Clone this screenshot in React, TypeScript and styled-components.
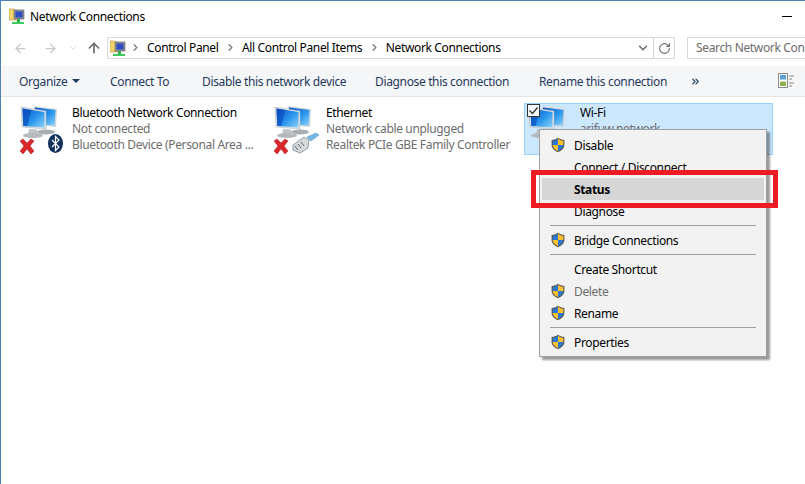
import React from "react";
import styled, { createGlobalStyle } from "styled-components";
import { ArrowLeft, ArrowRight, ArrowUp, ChevronDown, ChevronRight, RotateCw, ChevronsRight } from "lucide-react";

const GlobalStyle = createGlobalStyle`
  html, body { margin: 0; padding: 0; background: #fff; }
  body { font-family: "Noto Sans", "Open Sans", sans-serif; font-size: 12px; letter-spacing: -0.35px; color: #000; }
`;

const Win = styled.div`
  position: relative;
  box-sizing: border-box;
  width: 805px;
  height: 484px;
  overflow: hidden;
  background: #fff;
  border-top: 1px solid #4f81bd;
  border-left: 1px solid #4f81bd;
`;

const TitleBar = styled.div`
  height: 31px;
  display: flex;
  align-items: center;
  padding: 0 13px 0 8px;
  gap: 5px;
`;

const TitleText = styled.span`
  flex: 1;
  line-height: 16px;
`;

const MinimizeGlyph = styled.div`
  width: 10px;
  height: 1px;
  background: #000;
`;

const NavBar = styled.div`
  height: 34px;
  display: flex;
  align-items: center;
  padding: 0 0 2px 11px;
  box-sizing: border-box;
`;

const NavButton = styled.div<{ $w?: number; $gap: number; $color: string }>`
  width: ${(p) => p.$w ?? 16}px;
  margin-left: ${(p) => p.$gap}px;
  display: flex;
  justify-content: center;
  color: ${(p) => p.$color};
`;

const AddressBox = styled.div`
  margin-left: 5px;
  box-sizing: border-box;
  width: 568px;
  height: 22px;
  border: 1px solid #d9d9d9;
  display: flex;
  align-items: center;
  padding-left: 2px;
`;

const Crumbs = styled.div`
  flex: 1;
  display: flex;
  align-items: center;
  padding: 0 0 2px 2px;
`;

const Crumb = styled.span`
  margin: 0 4.5px 0 6px;
  white-space: nowrap;
`;

const CrumbArrow = styled(ChevronRight)`
  color: #808080;
  margin-left: 2px;
`;

const AddressAction = styled.div<{ $divider?: boolean }>`
  width: 20px;
  height: 20px;
  display: flex;
  align-items: center;
  justify-content: center;
  color: #6d6d6d;
  border-left: ${(p) => (p.$divider ? "1px solid #d9d9d9" : "none")};
`;

const SearchBox = styled.div`
  margin-left: 12px;
  box-sizing: border-box;
  flex: 1;
  height: 22px;
  border: 1px solid #d9d9d9;
  border-right: none;
  padding-left: 8px;
  line-height: 20px;
  color: #6d6d6d;
  white-space: nowrap;
  overflow: hidden;
`;

const Toolbar = styled.div`
  height: 31px;
  box-sizing: border-box;
  display: flex;
  align-items: center;
  background: #f5f6f7;
  border-bottom: 1px solid #e5e5e5;
  padding-left: 18px;
  color: #1e395b;
`;

const ToolItem = styled.div<{ $w: number }>`
  width: ${(p) => p.$w}px;
  flex: none;
  display: flex;
  align-items: center;
  gap: 5px;
  white-space: nowrap;
`;

const Caret = styled.span`
  width: 0;
  height: 0;
  border-left: 4px solid transparent;
  border-right: 4px solid transparent;
  border-top: 4px solid #1e395b;
`;

const ConnectionList = styled.div`
  display: flex;
  padding: 6px 0 0 15px;
  gap: 4px;
`;

const Connection = styled.div<{ $selected?: boolean }>`
  position: relative;
  box-sizing: border-box;
  width: ${(p) => (p.$selected ? 249 : 250)}px;
  height: 52px;
  display: flex;
  padding-left: 1px;
  background: ${(p) => (p.$selected ? "#cce8ff" : "transparent")};
  border: 1px solid ${(p) => (p.$selected ? "#99d1ff" : "transparent")};
`;

const ConnectionText = styled.div`
  margin-left: 6px;
  padding-top: 1px;
  line-height: 16px;
  white-space: nowrap;
`;

const Sub = styled.div`
  color: #6d6d6d;
`;

const Check = styled.div`
  position: absolute;
  left: 2px;
  top: 0;
  width: 13px;
  height: 13px;
  box-sizing: border-box;
  border: 1px solid #333;
  background: #f4f9fd;
  display: flex;
  align-items: center;
  justify-content: center;
`;

const Menu = styled.div`
  position: absolute;
  left: 538px;
  top: 128px;
  box-sizing: border-box;
  width: 228px;
  height: 228px;
  padding: 4px 2px 0;
  background: #f2f2f2;
  border: 1px solid #a0a0a0;
  box-shadow: 3px 3px 2px rgba(0, 0, 0, 0.4);
`;

const MenuRow = styled.div<{ $active?: boolean; $disabled?: boolean }>`
  height: 22px;
  display: flex;
  align-items: center;
  padding-left: 8px;
  gap: 8px;
  background: ${(p) => (p.$active ? "#d6d6d6" : "transparent")};
  font-weight: ${(p) => (p.$active ? 700 : 400)};
  color: ${(p) => (p.$disabled ? "#6d6d6d" : "#000")};
`;

const IconSlot = styled.span`
  width: 16px;
  height: 16px;
  flex: none;
`;

const Separator = styled.div`
  height: 1px;
  margin: 3px 8px;
  background: #a0a0a0;
`;

const Callout = styled.div`
  position: absolute;
  left: 530px;
  top: 169px;
  width: 247px;
  height: 38px;
  box-sizing: border-box;
  border: 5px solid #ed1c24;
`;

const Shield = () => (
  <svg width="16" height="16" viewBox="0 0 16 16">
    <path d="M8 .8C6 2.2 4 2.8 1.6 3v5c0 3.4 2.6 5.6 6.4 7.2 3.8-1.6 6.4-3.800 6.4-7.200V3C12 2.800 10 2.200 8 .8z" fill="#5f5a4e" />
    <path d="M8 2C6.400 3 4.600 3.600 2.700 3.900V8H8z" fill="#2a78d2" />
    <path d="M8 2c1.600 1 3.400 1.600 5.300 1.900V8H8z" fill="#fbc02d" />
    <path d="M2.700 8c.1 2.800 2.300 4.700 5.300 6V8z" fill="#fbc02d" />
    <path d="M13.300 8c-.1 2.800-2.300 4.700-5.300 6V8z" fill="#2a78d2" />
  </svg>
);

const FolderIcon = () => (
  <svg width="16" height="17" viewBox="0 0 16 17" style={{ flex: "none" }}>
    <path d="M0 1h5l1 1h3v10H0z" fill="#f3d36b" stroke="#b59a3e" strokeWidth=".6" />
    <rect x="5" y="2" width="10" height="9" fill="#8e8e99" stroke="#666" strokeWidth=".6" />
    <rect x="6.500" y="3.500" width="7" height="6" fill="#2f4fc4" />
    <rect x="8" y="11" width="3" height="3" fill="#25b04a" />
    <rect x="3" y="14" width="12" height="2" fill="#3ccb5e" />
  </svg>
);

const Monitors = ({ id }: { id: string }) => (
  <>
    <defs>
      <linearGradient id={id} x1="0" y1="0" x2="1" y2="1">
        <stop offset="0" stopColor="#0752c8" />
        <stop offset=".55" stopColor="#2a96ec" />
        <stop offset="1" stopColor="#8fd3fa" />
      </linearGradient>
    </defs>
    <ellipse cx="28" cy="28" rx="9" ry="2.500" fill="#a9aeb3" />
    <path d="M15 2l24 3-1 18-11-1z" fill="#cfd5da" />
    <path d="M17 3.500l20.500 2.500-.8 15.500-19.700-1.500z" fill={`url(#${id})`} />
    <path d="M3 3l25 4v18L4 23z" fill="#dfe3e6" stroke="#aab0b5" strokeWidth=".5" />
    <path d="M4.500 4.500l22 3.500v15.500L5.200 22z" fill={`url(#${id})`} />
    <path d="M4.500 4.500l9 1.400-4 16.400-4.300-.3z" fill="#0645b8" opacity=".55" />
    <path d="M11 25l8 .5.500 5H10z" fill="#bfc4c8" />
    <ellipse cx="15" cy="31.500" rx="10" ry="2.600" fill="#b4b9bd" />
  </>
);

const RedX = () => (
  <path d="M2 37l3-2 4 4 4-4 3 2-4 5 4 5-3 3-4-5-4 5-3-3 4-5z" fill="#d9272a" stroke="#a51a1c" strokeWidth=".5" />
);

const NetIcon = ({ id, badge }: { id: string; badge?: "bluetooth" | "plug" }) => (
  <svg width="48" height="50" viewBox="0 0 48 50" style={{ flex: "none" }}>
    <Monitors id={id} />
    {badge && <RedX />}
    {badge === "bluetooth" && (
      <>
        <ellipse cx="37.500" cy="39.500" rx="7.500" ry="9.500" fill="#10305e" />
        <path d="M34 36l7 7-3.500 3.500v-14L41 36l-7 7" fill="none" stroke="#fff" strokeWidth="1.200" />
      </>
    )}
    {badge === "plug" && (
      <>
        <path d="M21 41l11-8 5 3-1 8-8 5-7-3z" fill="#d6dadd" stroke="#6f7a84" strokeWidth=".7" />
        <path d="M23 42l3 4M26 40l3 4M29 38l3 4" stroke="#5d6872" strokeWidth="1" />
        <path d="M35 33l9-4 3 2-8 6z" fill="#6fb7e6" stroke="#5a8fb5" strokeWidth=".5" />
      </>
    )}
  </svg>
);

const menu = [
  { label: "Disable", shield: true },
  { label: "Connect / Disconnect" },
  { label: "Status", active: true },
  { label: "Diagnose", sep: true },
  { label: "Bridge Connections", shield: true, sep: true },
  { label: "Create Shortcut" },
  { label: "Delete", shield: true, disabled: true },
  { label: "Rename", shield: true, sep: true },
  { label: "Properties", shield: true },
];

const toolItems = [
  { label: "Connect To", w: 92 },
  { label: "Disable this network device", w: 173 },
  { label: "Diagnose this connection", w: 164 },
  { label: "Rename this connection", w: 151 },
];

export default function App() {
  return (
    <>
      <GlobalStyle />
      <Win>
        <TitleBar>
          <FolderIcon />
          <TitleText>Network Connections</TitleText>
          <MinimizeGlyph />
        </TitleBar>
        <NavBar>
          <NavButton $gap={0} $color="#c8c8c8"><ArrowLeft size={15} /></NavButton>
          <NavButton $gap={14} $color="#c8c8c8"><ArrowRight size={15} /></NavButton>
          <NavButton $gap={8} $w={14} $color="#d0d0d0"><ChevronDown size={10} /></NavButton>
          <NavButton $gap={6} $color="#6d6d6d"><ArrowUp size={16} strokeWidth={2.500} /></NavButton>
          <AddressBox>
            <FolderIcon />
            <Crumbs>
              <CrumbArrow size={11} strokeWidth={3} />
              <Crumb>Control Panel</Crumb>
              <CrumbArrow size={11} strokeWidth={3} />
              <Crumb>All Control Panel Items</Crumb>
              <CrumbArrow size={11} strokeWidth={3} />
              <Crumb>Network Connections</Crumb>
            </Crumbs>
            <AddressAction><ChevronDown size={14} strokeWidth={2.500} /></AddressAction>
            <AddressAction $divider><RotateCw size={13} strokeWidth={2} /></AddressAction>
          </AddressBox>
          <SearchBox>Search Network Connections</SearchBox>
        </NavBar>
        <Toolbar>
          <ToolItem $w={91}>Organize <Caret /></ToolItem>
          {toolItems.map((t) => (
            <ToolItem key={t.label} $w={t.w}>{t.label}</ToolItem>
          ))}
          <ToolItem $w={88}><ChevronsRight size={11} strokeWidth={2.500} /></ToolItem>
          <svg width="17" height="16" viewBox="0 0 17 16">
            <rect x=".5" y=".5" width="9" height="14" fill="#fff" stroke="#8a8a8a" />
            <rect x="2" y="2" width="6" height="4.500" fill="#5ba3d9" />
            <rect x="2" y="8.500" width="6" height="4.500" fill="#8fb04f" />
            <path d="M11 3h5M11 6h3M11 10h5M11 13h3" stroke="#8a8a8a" />
          </svg>
        </Toolbar>
        <ConnectionList>
          <Connection>
            <NetIcon id="g1" badge="bluetooth" />
            <ConnectionText>
              Bluetooth Network Connection
              <Sub>Not connected</Sub>
              <Sub>Bluetooth Device (Personal Area ...</Sub>
            </ConnectionText>
          </Connection>
          <Connection>
            <NetIcon id="g2" badge="plug" />
            <ConnectionText>
              Ethernet
              <Sub>Network cable unplugged</Sub>
              <Sub>Realtek PCIe GBE Family Controller</Sub>
            </ConnectionText>
          </Connection>
          <Connection $selected>
            <NetIcon id="g3" />
            <Check>
              <svg width="11" height="11" viewBox="0 0 11 11">
                <path d="M1.500 5.500l3 3 5-6" fill="none" stroke="#333" strokeWidth="1.300" />
              </svg>
            </Check>
            <ConnectionText>
              Wi-Fi
              <Sub>arifuw.network</Sub>
            </ConnectionText>
          </Connection>
        </ConnectionList>
        <Menu>
          {menu.map((m) => (
            <React.Fragment key={m.label}>
              <MenuRow $active={m.active} $disabled={m.disabled}>
                <IconSlot>{m.shield && <Shield />}</IconSlot>
                {m.label}
              </MenuRow>
              {m.sep && <Separator />}
            </React.Fragment>
          ))}
        </Menu>
        <Callout />
      </Win>
    </>
  );
}
